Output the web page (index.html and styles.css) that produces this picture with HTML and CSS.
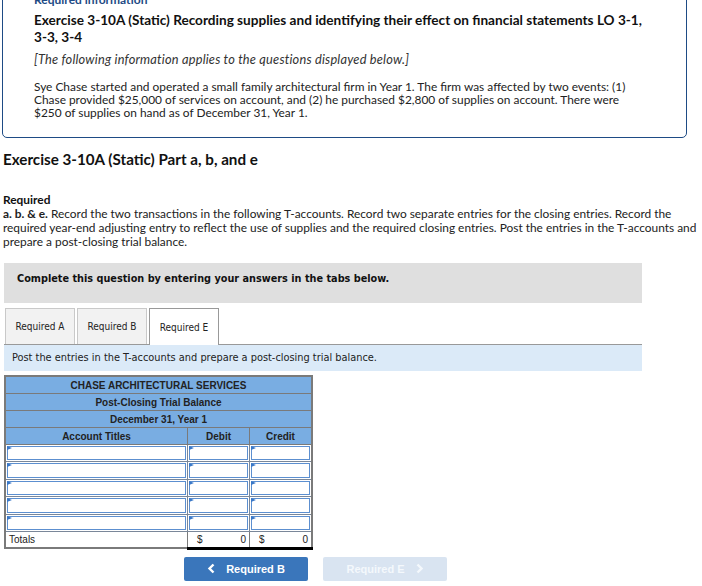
FILE: index.html
```html
<!DOCTYPE html>
<html lang="en">
<head>
    <meta charset="UTF-8">
    <title>Exercise 3-10A (Static) Part a, b, and e</title>
    <meta name="viewport" content="width=device-width, initial-scale=1">
    <link rel="stylesheet" href="styles.css">
</head>
<body>
    <div class="info-box">
        <div class="info-label">Required information</div>
        <h2 class="info-title">Exercise 3-10A (Static) Recording supplies and identifying their effect on financial statements <span class="nowrap">LO 3-1,</span> <span class="nowrap">3-3, 3-4</span></h2>
        <p class="info-note">[The following information applies to the questions displayed below.]</p>
        <p class="info-text">Sye Chase started and operated a small family architectural firm in Year 1. The firm was affected by two events: (1) Chase provided $25,000 of services on account, and (2) he purchased $2,800 of supplies on account. There were $250 of supplies on hand as of December 31, Year 1.</p>
    </div>

    <div class="part">
        <h3 class="part-title">Exercise 3-10A (Static) Part a, b, and e</h3>

        <div class="required">
            <div class="required-label">Required</div>
            <p><b>a. b. &amp; e.</b> Record the two transactions in the following T-accounts. Record two separate entries for the closing entries. Record the required <span class="nowrap">year-end</span> adjusting entry to reflect the use of supplies and the required closing entries. Post the entries in the T-accounts and prepare a <span class="nowrap">post-closing</span> trial balance.</p>
        </div>

        <div class="question">
            <div class="instructions">Complete this question by entering your answers in the tabs below.</div>

            <div class="tabs">
                <div class="tab">Required A</div>
                <div class="tab">Required B</div>
                <div class="tab active">Required E</div>
            </div>
            <div class="tab-band">Post the entries in the T-accounts and prepare a post-closing trial balance.</div>

            <table class="trial">
                <thead>
                    <tr><th colspan="3">CHASE ARCHITECTURAL SERVICES</th></tr>
                    <tr><th colspan="3">Post-Closing Trial Balance</th></tr>
                    <tr><th colspan="3">December 31, Year 1</th></tr>
                    <tr>
                        <th class="col-title">Account Titles</th>
                        <th class="col-amt">Debit</th>
                        <th class="col-amt">Credit</th>
                    </tr>
                </thead>
                <tbody id="trialBody">
                    <!-- entry rows are added here -->
                </tbody>
                <tfoot>
                    <tr>
                        <td class="totals-label">Totals</td>
                        <td class="total"><span>$</span><span>0</span></td>
                        <td class="total"><span>$</span><span>0</span></td>
                    </tr>
                </tfoot>
            </table>

            <div class="nav">
                <button class="nav-btn">
                    <svg width="9" height="11" viewBox="0 0 9 11"><polyline points="6.5,1.5 2.5,5.5 6.5,9.5" fill="none" stroke="#fff" stroke-width="2.4"/></svg>
                    Required B
                </button>
                <button class="nav-btn disabled">
                    Required E
                    <svg width="9" height="11" viewBox="0 0 9 11"><polyline points="2.5,1.5 6.5,5.5 2.5,9.5" fill="none" stroke="#f4f8fc" stroke-width="2.4"/></svg>
                </button>
            </div>
        </div>
    </div>

    <script>
        const trialBody = document.getElementById('trialBody');
        for (let i = 0; i < 5; i++) {
            const tr = document.createElement('tr');
            tr.innerHTML = `
                <td><div class="cell-input"></div></td>
                <td><div class="cell-input"></div></td>
                <td><div class="cell-input"></div></td>
            `;
            trialBody.appendChild(tr);
        }
    </script>
</body>
</html>
```

FILE: styles.css
```css
body { font-family: Lato, "Open Sans", sans-serif; margin: 0; background: #fff; color: #222; }
.nowrap { white-space: nowrap; }

.info-box { margin: -14px 15px 0 2px; border: 1px solid #1e4b85; border-radius: 0 0 5px 5px; padding: 5px 42px 18px 31px; }
.info-label { font-size: 12px; font-weight: bold; color: #1e4b85; line-height: 16px; }
.info-title { font-size: 13.6px; line-height: 17px; margin: 4px 0 0; color: #111; }
.info-note { font-size: 12.8px; letter-spacing: 0.2px; font-style: italic; line-height: 14px; margin: 6px 0 0; color: #333; }
.info-text { font-size: 11.9px; line-height: 13px; margin: 14px 0 0; color: #222; }

.part { padding: 0 0 0 3px; }
.part-title { font-size: 15.2px; line-height: 17px; margin: 13px 0 0; color: #111; }
.required { margin-top: 25px; font-size: 11.9px; line-height: 14px; }
.required-label { font-weight: bold; color: #111; }
.required p { margin: 0; }

.question { width: 638px; margin: 14px 0 0 1px; }
.instructions { background: #dfdfdf; height: 40px; box-sizing: border-box; padding: 9px 13px; font-family: "DejaVu Sans Condensed", "DejaVu Sans", sans-serif; font-weight: bold; font-size: 10.8px; line-height: 14px; color: #111; }

.tabs { display: flex; gap: 2px; margin-top: 5px; padding-left: 1px; }
.tab { width: 70px; height: 36px; box-sizing: border-box; border: 1px solid #c9c9c9; border-bottom: none; background: #f2f2f2; display: flex; align-items: center; justify-content: center; font-family: "DejaVu Sans Condensed", "DejaVu Sans", sans-serif; font-size: 10px; color: #222; }
.tab.active { background: #fff; border-color: #999; height: 37px; margin-bottom: -1px; position: relative; }
.tab-band { background: #dbeaf8; border-top: 1px solid #999; height: 27px; box-sizing: border-box; padding: 6px 8px; font-family: "DejaVu Sans Condensed", "DejaVu Sans", sans-serif; font-size: 10.9px; line-height: 14px; color: #222; }

.trial { border-collapse: collapse; margin-top: 4px; font-family: "Liberation Sans", Arial, sans-serif; font-size: 10px; color: #222; border: 2px solid #7a7a7a; }
.trial th { background: #79ade2; border: 1px solid #7a7a7a; height: 16px; padding: 0; font-weight: bold; }
.col-title { width: 181px; }
.col-amt { width: 61px; }
.trial tbody td { border: 1px solid #7a8799; padding: 1px; }
.cell-input { height: 12.4px; border: 1px solid #5c8fd0; background: #fff; position: relative; }
.cell-input:before { content: ""; position: absolute; left: -1px; top: -1px; border-left: 5px solid #3a78c8; border-top: 2px solid transparent; border-bottom: 2px solid transparent; }
.trial tfoot td { border: 1px solid #7a7a7a; height: 15px; padding: 0 3px; }
.totals-label { text-align: left; }
.trial tfoot td.total { border-top: 1px solid #000; border-bottom: 3px solid #000; }
.total span:first-child { float: left; padding-left: 6px; }
.total span:last-child { float: right; }

.nav { display: flex; gap: 15px; margin: 7px 0 0 180px; }
.nav-btn { width: 124px; height: 24px; border: none; border-radius: 2px; background: #3a76bb; color: #fff; font-family: "Liberation Sans", Arial, sans-serif; font-weight: bold; font-size: 11px; display: flex; align-items: center; justify-content: center; gap: 10px; padding: 0; }
.nav-btn.disabled { background: #d9e4f1; color: #f4f8fc; }
```
